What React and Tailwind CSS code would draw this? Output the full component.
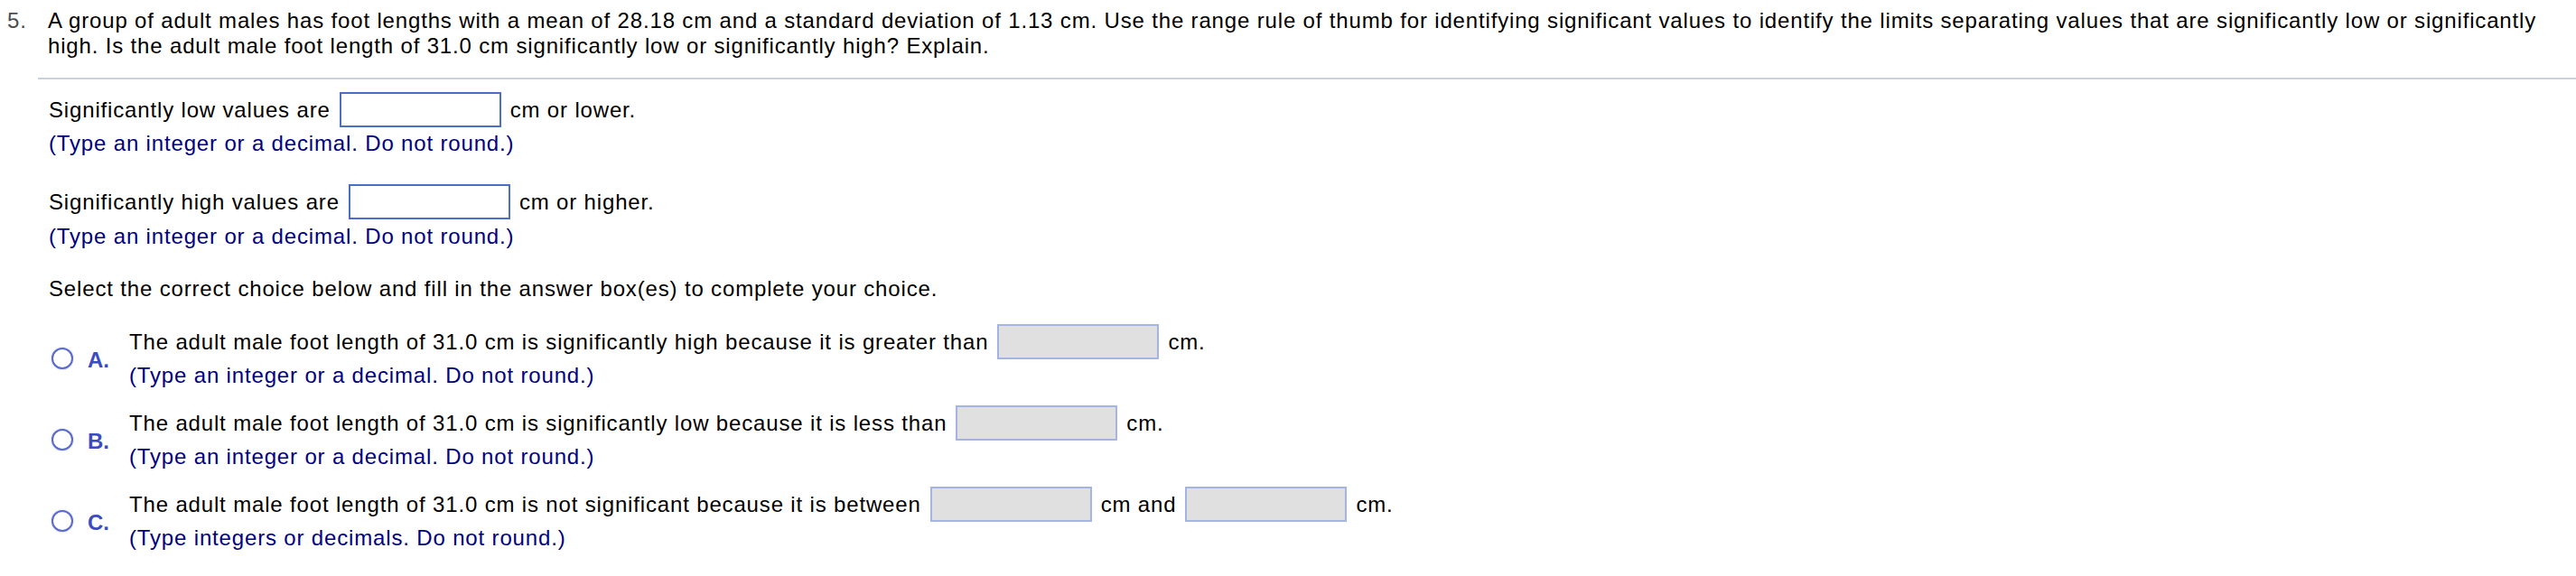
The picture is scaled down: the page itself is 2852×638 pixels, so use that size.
import React from "react";

function RowBox() {
  return <div className="mx-[10px] h-[39px] w-[179px] shrink-0 border-2 border-[#4a6fc7] bg-white" />;
}

function OptBox() {
  return <div className="mx-[10px] h-[39px] w-[179px] shrink-0 border-2 border-[#a4b5e4] bg-[#e0e0e0]" />;
}

function Option({ letter, children, hint, first }) {
  return (
    <div className={`flex items-start ${first ? "mt-[25px]" : "mt-[19px]"}`}>
      <div className="mt-[26px] h-[24px] w-[24px] shrink-0 rounded-full border-[2.5px] border-[#5a6acf] bg-white shadow-[0_0_2px_#a9b2e8]" />
      <div className="ml-[16px] mt-[26px] w-[46px] shrink-0 font-bold leading-[28px] tracking-normal text-[#3b4cc0]">{letter}</div>
      <div>
        <div className="flex h-[39px] items-center whitespace-nowrap">{children}</div>
        <div className="mt-[4px] leading-[28px] text-[#000080]">{hint}</div>
      </div>
    </div>
  );
}

export default function App() {
  return (
    <div className="h-[638px] w-[2852px] overflow-hidden bg-white font-['Liberation_Sans',Arial,sans-serif] text-[24px] tracking-[0.84px] text-black">
      <div className="flex pt-[9px] leading-[28px]">
        <div className="w-[53px] shrink-0 pl-[8px] text-[#4d4d4d]">5.</div>
        <div className="flex-1 pr-[10px]">
          A group of adult males has foot lengths with a mean of 28.18 cm and a standard deviation of 1.13 cm. Use the range rule of thumb for identifying significant values to identify the limits separating values that are significantly low or significantly high. Is the adult male foot length of 31.0 cm significantly low or significantly high? Explain.
        </div>
      </div>
      <div className="ml-[42px] mt-[21px] h-[2px] bg-[#cbd0dd]" />
      <div className="pl-[54px]">
        <div className="mt-[14px] flex h-[39px] items-center whitespace-nowrap">
          <span>Significantly low values are</span>
          <RowBox />
          <span>cm or lower.</span>
        </div>
        <div className="mt-[4px] leading-[28px] text-[#000080]">(Type an integer or a decimal. Do not round.)</div>
        <div className="mt-[31px] flex h-[39px] items-center whitespace-nowrap">
          <span>Significantly high values are</span>
          <RowBox />
          <span>cm or higher.</span>
        </div>
        <div className="mt-[5px] leading-[28px] text-[#000080]">(Type an integer or a decimal. Do not round.)</div>
        <div className="mt-[30px] leading-[28px]">Select the correct choice below and fill in the answer box(es) to complete your choice.</div>
      </div>
      <div className="pl-[57px]">
        <Option first letter="A." hint="(Type an integer or a decimal. Do not round.)">
          <span>The adult male foot length of 31.0 cm is significantly high because it is greater than</span>
          <OptBox />
          <span>cm.</span>
        </Option>
        <Option letter="B." hint="(Type an integer or a decimal. Do not round.)">
          <span>The adult male foot length of 31.0 cm is significantly low because it is less than</span>
          <OptBox />
          <span>cm.</span>
        </Option>
        <Option letter="C." hint="(Type integers or decimals. Do not round.)">
          <span>The adult male foot length of 31.0 cm is not significant because it is between</span>
          <OptBox />
          <span>cm and</span>
          <OptBox />
          <span>cm.</span>
        </Option>
      </div>
    </div>
  );
}
